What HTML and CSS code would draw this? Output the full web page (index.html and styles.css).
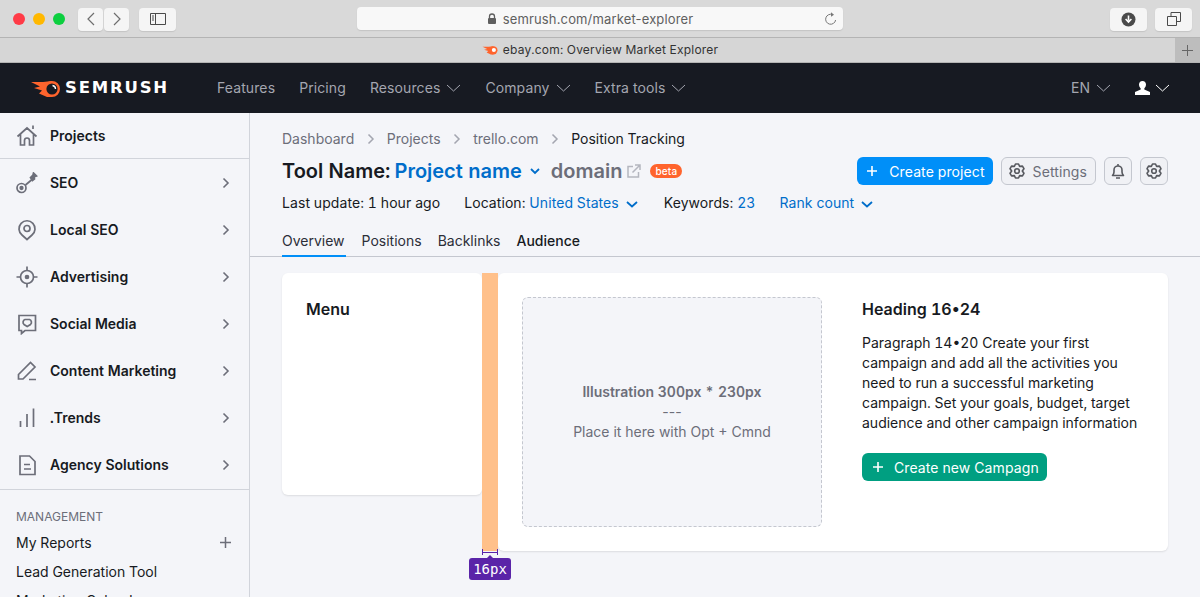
FILE: index.html
```html
<!DOCTYPE html>
<html lang="en">
<head>
  <meta charset="UTF-8" />
  <meta name="viewport" content="width=device-width, initial-scale=1.0" />
  <title>ebay.com: Overview Market Explorer</title>
  <link rel="stylesheet" href="styles.css">
</head>
<body>
  <!-- browser chrome -->
  <div class="toolbar">
    <div class="lights">
      <span class="light red"></span>
      <span class="light yellow"></span>
      <span class="light green"></span>
    </div>
    <div class="nav-btns">
      <span class="chrome-btn small"><svg width="10" height="16" viewBox="0 0 10 16"><path d="M8 2 2 8l6 6" class="line"/></svg></span>
      <span class="chrome-btn small"><svg width="10" height="16" viewBox="0 0 10 16"><path d="M2 2l6 6-6 6" class="line"/></svg></span>
    </div>
    <span class="chrome-btn sidebar-btn"><svg width="16" height="12" viewBox="0 0 16 12"><path d="M.5.5h15v11H.5zM5.500.5v11M2 3h2M2 5h2M2 7h2" class="line-thin"/></svg></span>
    <div class="url-bar">
      <span class="url-text">
        <svg width="10" height="12" viewBox="0 0 10 12"><path d="M2.500 5V3.500a2.500 2.500 0 0 1 5 0V5" fill="none" stroke="#5f5f5f" stroke-width="1.300"/><rect x="1" y="5" width="8" height="6" rx="1" fill="#5f5f5f"/></svg>
        semrush.com/market-explorer
      </span>
      <svg class="reload" width="13" height="14" viewBox="0 0 13 14"><path d="M8.500 2.600A5 5 0 1 0 11.600 8" fill="none" stroke="#777" stroke-width="1"/><path d="M7 .3l3 2.400-3 2.100z" fill="#777"/></svg>
    </div>
    <div class="chrome-right">
      <span class="chrome-btn wide"><svg width="15" height="15" viewBox="0 0 15 15"><circle cx="7.500" cy="7.500" r="7" fill="#4a4a4a"/><path d="M7.500 3.500v5M4.600 7l2.900 3 2.900-3" fill="none" stroke="#fff" stroke-width="1.600"/></svg></span>
      <span class="chrome-btn wide"><svg width="14" height="14" viewBox="0 0 14 14"><path d="M.5 4.500h9v9h-9zM4 4V.5h9.500v9H10" class="line-thin"/></svg></span>
    </div>
  </div>
  <div class="tabbar">
    <div class="tab-title">
      <svg width="16" height="10" viewBox="0 0 31 19"><path d="M1 3H13L22 2V18H17L9 14.500L12 11.500L4 9L10 7.500Z" fill="#ff642d"/><circle cx="22" cy="10" r="8" fill="#ff642d"/><circle cx="23" cy="9.500" r="4" fill="#fff"/></svg>
      ebay.com: Overview Market Explorer
    </div>
    <div class="tab-add">
      <svg width="11" height="11" viewBox="0 0 11 11"><path d="M5.500 0v11M0 5.500h11" stroke="#666" stroke-width="1"/></svg>
    </div>
  </div>

  <!-- site header -->
  <header class="site-header">
    <div class="logo">
      <svg width="31" height="19" viewBox="0 0 31 19">
        <path d="M1 3H13L22 2V18H17L9 14.500L12 11.500L4 9L10 7.500Z" fill="#ff642d"/>
        <circle cx="22" cy="10" r="6.800" fill="#171a22" stroke="#ff642d" stroke-width="2.400"/>
        <path d="M22.500 6.500a3.500 3.500 0 0 1 3 3.500" fill="none" stroke="#fff" stroke-width="1.300"/>
      </svg>
      <span class="logo-text">SEMRUSH</span>
    </div>
    <nav class="top-nav">
      <a>Features</a>
      <a>Pricing</a>
      <a>Resources <svg class="caret" width="15" height="8" viewBox="0 0 15 8"><path d="M1 1l6.500 6L14 1"/></svg></a>
      <a>Company <svg class="caret" width="15" height="8" viewBox="0 0 15 8"><path d="M1 1l6.500 6L14 1"/></svg></a>
      <a>Extra tools <svg class="caret" width="15" height="8" viewBox="0 0 15 8"><path d="M1 1l6.500 6L14 1"/></svg></a>
    </nav>
    <div class="top-right">
      <a>EN <svg class="caret" width="15" height="8" viewBox="0 0 15 8"><path d="M1 1l6.500 6L14 1"/></svg></a>
      <a class="user">
        <svg width="15" height="14" viewBox="0 0 15 14"><path d="M7.500 0C5.300 0 4 1.600 4 3.600c0 1.500.7 3 1.700 3.800v1L0 11v3h15v-3L9.300 8.400v-1C10.300 6.600 11 5.100 11 3.600 11 1.600 9.700 0 7.500 0z" fill="#fff"/></svg>
        <svg class="caret white" width="15" height="8" viewBox="0 0 15 8"><path d="M1 1l6.500 6L14 1"/></svg>
      </a>
    </div>
  </header>

  <div class="page">
    <aside class="sidebar">
      <a class="side-projects">
        <svg class="side-icon" width="22" height="22" viewBox="0 0 22 22"><path d="M1.500 11.500 11 3l9.500 8.500M4.500 9.500V20h4v-4.500a2.500 2.500 0 0 1 5 0V20h4V9.500M17 .5v3.500"/></svg>
        Projects
      </a>
      <div class="side-list">
        <a class="side-item">
          <svg class="side-icon" width="22" height="22" viewBox="0 0 22 22"><circle cx="5.500" cy="16" r="4.500"/><circle cx="5.500" cy="16" r="1.300" fill="#6c6e79"/><path d="M9.500 13 16 7.500"/><path d="M14.500 5.500 17 3l.5-2 3 3-2.500 1 .5 2-2 1.500z" fill="#6c6e79"/></svg>
          <span>SEO</span>
          <svg class="chev" width="8" height="12" viewBox="0 0 8 12"><path d="M1.500 1.500 6 6l-4.500 4.500"/></svg>
        </a>
        <a class="side-item">
          <svg class="side-icon" width="22" height="22" viewBox="0 0 22 22"><path d="M11 20.500 6 16a8 8 0 1 1 10 0z"/><circle cx="11" cy="9.500" r="3"/></svg>
          <span>Local SEO</span>
          <svg class="chev" width="8" height="12" viewBox="0 0 8 12"><path d="M1.500 1.500 6 6l-4.500 4.500"/></svg>
        </a>
        <a class="side-item">
          <svg class="side-icon" width="22" height="22" viewBox="0 0 22 22"><circle cx="11" cy="11" r="6.500"/><circle cx="11" cy="11" r="1.500" fill="#6c6e79"/><path d="M11 .5v4M11 17.500v4M.5 11h4M17.500 11h4"/></svg>
          <span>Advertising</span>
          <svg class="chev" width="8" height="12" viewBox="0 0 8 12"><path d="M1.500 1.500 6 6l-4.500 4.500"/></svg>
        </a>
        <a class="side-item">
          <svg class="side-icon" width="22" height="22" viewBox="0 0 22 22"><path d="M3 2.500h16.500v15H9L5.500 20.500v-3H3z"/><path d="M11.200 13.500 8 11.500a3 3 0 0 1 1-5h4.500a3 3 0 0 1 1 5z"/></svg>
          <span>Social Media</span>
          <svg class="chev" width="8" height="12" viewBox="0 0 8 12"><path d="M1.500 1.500 6 6l-4.500 4.500"/></svg>
        </a>
        <a class="side-item">
          <svg class="side-icon" width="22" height="22" viewBox="0 0 22 22"><path d="M2.500 19v-4.500L14.500 2.500 19 7 7 19zM13 19.500h7"/></svg>
          <span>Content Marketing</span>
          <svg class="chev" width="8" height="12" viewBox="0 0 8 12"><path d="M1.500 1.500 6 6l-4.500 4.500"/></svg>
        </a>
        <a class="side-item">
          <svg class="side-icon" width="22" height="22" viewBox="0 0 22 22"><path d="M4.500 20v-6M11 20V7M17.500 20V1.500"/></svg>
          <span>.Trends</span>
          <svg class="chev" width="8" height="12" viewBox="0 0 8 12"><path d="M1.500 1.500 6 6l-4.500 4.500"/></svg>
        </a>
        <a class="side-item">
          <svg class="side-icon" width="22" height="22" viewBox="0 0 22 22"><path d="M4 2h9.500L19 7.500V20.500H4zM8 10.500h6M8 15h7"/></svg>
          <span>Agency Solutions</span>
          <svg class="chev" width="8" height="12" viewBox="0 0 8 12"><path d="M1.500 1.500 6 6l-4.500 4.500"/></svg>
        </a>
      </div>
      <div class="side-section">
        <div class="side-label">MANAGEMENT</div>
        <a class="side-link">My Reports <svg width="11" height="11" viewBox="0 0 11 11"><path d="M5.500 0v11M0 5.500h11" stroke="#6c6e79" stroke-width="1.500"/></svg></a>
        <a class="side-link">Lead Generation Tool</a>
        <a class="side-link">Marketing Calendar</a>
      </div>
    </aside>

    <main class="content">
      <div class="crumbs">
        <a>Dashboard</a><svg class="crumb-sep" width="8" height="12" viewBox="0 0 8 12"><path d="M1.500 1.500 6 6l-4.500 4.500"/></svg>
        <a>Projects</a><svg class="crumb-sep" width="8" height="12" viewBox="0 0 8 12"><path d="M1.500 1.500 6 6l-4.500 4.500"/></svg>
        <a>trello.com</a><svg class="crumb-sep" width="8" height="12" viewBox="0 0 8 12"><path d="M1.500 1.500 6 6l-4.500 4.500"/></svg>
        <span>Position Tracking</span>
      </div>

      <div class="title-row">
        <h1 class="title">Tool Name:</h1>
        <a class="project-name">Project name</a>
        <svg class="blue-caret" width="10" height="7" viewBox="0 0 10 7"><path d="M1 1l4 4 4-4"/></svg>
        <span class="domain">domain</span>
        <svg class="ext" width="14" height="14" viewBox="0 0 14 14"><path d="M6 2.500H1v10.500h10.500V8M5.500 8.500 12.500 1.500M8 1h5v5" fill="none" stroke="#b4b6bf" stroke-width="1.500"/></svg>
        <span class="beta">beta</span>
        <div class="title-actions">
          <button class="btn primary"><svg width="12" height="12" viewBox="0 0 12 12"><path d="M6 1v10M1 6h10" stroke="#fff" stroke-width="1.600"/></svg>Create project</button>
          <button class="btn grey"><svg class="gear" width="16" height="16" viewBox="0 0 16 16"><path d="M6.500 1H9.500L10.650 3.400L13.450 3.100L14.950 5.700L13.300 8L14.950 10.300L13.450 12.900L10.650 12.600L9.500 15H6.500L5.350 12.600L2.550 12.900L1.050 10.300L2.700 8L1.050 5.700L2.550 3.100L5.350 3.400Z"/><circle cx="8" cy="8" r="2.300"/></svg>Settings</button>
          <button class="btn grey icon-only"><svg class="gear" width="16" height="16" viewBox="0 0 16 16"><path d="M2.500 12.500c1-1 1.500-1.500 1.500-3.500V7a4 4 0 0 1 8 0v2c0 2 .5 2.500 1.500 3.500zM6 15h4M8 1v2"/></svg></button>
          <button class="btn grey icon-only"><svg class="gear" width="16" height="16" viewBox="0 0 16 16"><path d="M6.500 1H9.500L10.650 3.400L13.450 3.100L14.950 5.700L13.300 8L14.950 10.300L13.450 12.900L10.650 12.600L9.500 15H6.500L5.350 12.600L2.550 12.900L1.050 10.300L2.700 8L1.050 5.700L2.550 3.100L5.350 3.400Z"/><circle cx="8" cy="8" r="2.300"/></svg></button>
        </div>
      </div>

      <div class="meta-row">
        <span>Last update: 1 hour ago</span>
        <span>Location: <a>United States</a><svg class="blue-caret" width="12" height="7" viewBox="0 0 12 7"><path d="M1 1l5 4.500L11 1"/></svg></span>
        <span>Keywords: <a>23</a></span>
        <span><a>Rank count</a><svg class="blue-caret" width="12" height="7" viewBox="0 0 12 7"><path d="M1 1l5 4.500L11 1"/></svg></span>
      </div>

      <div class="tabs">
        <a class="tab active">Overview</a>
        <a class="tab">Positions</a>
        <a class="tab">Backlinks</a>
        <a class="tab strong">Audience</a>
      </div>

      <div class="body-area">
        <section class="menu-card">
          <h2>Menu</h2>
        </section>
        <div class="spacer-mark">
          <div class="spacer-bracket"></div>
          <div class="spacer-label">16px</div>
        </div>
        <section class="main-card">
          <div class="illustration">
            <strong>Illustration 300px * 230px</strong>
            <span>---</span>
            <span>Place it here with Opt + Cmnd</span>
          </div>
          <div class="copy">
            <h2>Heading 16•24</h2>
            <p>Paragraph 14•20 Create your first campaign and add all the activities you need to run a successful marketing campaign. Set your goals, budget, target audience and other campaign information</p>
            <button class="btn green"><svg width="12" height="12" viewBox="0 0 12 12"><path d="M6 1v10M1 6h10" stroke="#fff" stroke-width="1.600"/></svg>Create new Campagn</button>
          </div>
        </section>
      </div>
    </main>
  </div>
</body>
</html>
```
FILE: styles.css
```css
* {
  box-sizing: border-box;
}
html, body {
  margin: 0;
  height: 597px;
  overflow: hidden;
}
body {
  font-family: Inter, "Liberation Sans", sans-serif;
  font-size: 14px;
  line-height: 20px;
  font-variant-numeric: tabular-nums;
  color: #171a22;
  background: #f4f5f9;
}
h1, h2, p {
  margin: 0;
}
button {
  font-family: inherit;
  font-variant-numeric: inherit;
}

/* browser chrome */
.toolbar {
  height: 38px;
  display: flex;
  align-items: center;
  padding: 1px 8px 0 13px;
  background: #d9d9d9;
  border-bottom: 1px solid #b4b4b4;
  position: relative;
}
.lights {
  display: flex;
  gap: 8px;
  width: 65px;
}
.light {
  width: 12px;
  height: 12px;
  border-radius: 50%;
}
.light.red { background: #ff3b47; }
.light.yellow { background: #ffb800; }
.light.green { background: #0ccf3f; }
.nav-btns {
  display: flex;
  gap: 1px;
}
.chrome-btn {
  display: flex;
  align-items: center;
  justify-content: center;
  height: 23px;
  background: #f5f5f5;
  border-radius: 4px;
  box-shadow: 0 1px 1px #c4c4c4;
}
.chrome-btn.small { width: 25px; }
.chrome-btn.wide { width: 37px; }
.sidebar-btn {
  width: 37px;
  margin-left: 10px;
}
.line {
  fill: none;
  stroke: #6e6e6e;
  stroke-width: 1.200;
}
.line-thin {
  fill: none;
  stroke: #4a4a4a;
  stroke-width: 1;
}
.url-bar {
  position: absolute;
  left: 357px;
  top: 7px;
  width: 486px;
  height: 23px;
  padding-right: 20px;
  background: #f8f8f8;
  border-radius: 4px;
  box-shadow: 0 1px 1px #c4c4c4;
  display: flex;
  align-items: center;
  justify-content: center;
  color: #5f5f5f;
  font-size: 13px;
  font-variant-numeric: normal;
  letter-spacing: .15px;
}
.url-text {
  display: flex;
  align-items: center;
  gap: 6px;
}
.reload {
  position: absolute;
  right: 6px;
  top: 5px;
}
.chrome-right {
  margin-left: auto;
  display: flex;
  gap: 8px;
}
.tabbar {
  height: 25px;
  background: #d6d6d6;
  border-bottom: 1px solid #b4b4b4;
  display: flex;
  align-items: center;
  position: relative;
  justify-content: center;
}
.tab-title {
  display: flex;
  align-items: center;
  gap: 5px;
  font-size: 12px;
  letter-spacing: .2px;
  color: #333;
}
.tab-add {
  position: absolute;
  right: 0;
  top: 0;
  width: 25px;
  height: 24px;
  background: #bdbdbd;
  display: flex;
  align-items: center;
  justify-content: center;
}

/* site header */
.site-header {
  height: 50px;
  background: #171a22;
  display: flex;
  align-items: center;
  padding: 0 30px;
}
.logo {
  display: flex;
  align-items: center;
  gap: 4px;
  width: 187px;
}
.logo-text {
  color: #fff;
  font-family: "DejaVu Sans", sans-serif;
  font-size: 16.500px;
  font-weight: 700;
  letter-spacing: 1.800px;
}
.top-nav {
  display: flex;
  gap: 24px;
  color: #a4a6b0;
  letter-spacing: .1px;
}
.top-nav a, .top-right a {
  display: flex;
  align-items: center;
  gap: 6px;
}
.caret {
  fill: none;
  stroke: #a4a6b0;
  stroke-width: 1;
}
.caret.white {
  stroke: #fff;
}
.top-right {
  margin-left: auto;
  display: flex;
  gap: 24px;
  color: #a4a6b0;
}
.top-right .user {
  gap: 5px;
}

/* page */
.page {
  display: flex;
  height: 484px;
}
.sidebar {
  width: 250px;
  flex: none;
  border-right: 1px solid #d1d4db;
  overflow: hidden;
}
.side-projects {
  height: 46px;
  border-bottom: 1px solid #d1d4db;
  display: flex;
  align-items: center;
  gap: 12px;
  padding-left: 16px;
  font-weight: 600;
}
.side-icon {
  flex: none;
  fill: none;
  stroke: #6c6e79;
  stroke-width: 1.700;
}
.side-list {
  padding-bottom: 1px;
  border-bottom: 1px solid #d1d4db;
}
.side-item {
  height: 47px;
  display: flex;
  align-items: center;
  gap: 12px;
  padding: 0 19px 0 16px;
  font-weight: 600;
}
.side-item span {
  flex: 1;
}
.chev {
  fill: none;
  stroke: #6c6e79;
  stroke-width: 1.600;
}
.side-section {
  padding: 18px 18px 0 16px;
}
.side-label {
  font-size: 12px;
  line-height: 18px;
  color: #6c6e79;
}
.side-link {
  display: flex;
  justify-content: space-between;
  align-items: center;
  height: 29px;
  padding-top: 4px;
}

/* content */
.content {
  flex: 1;
  min-width: 0;
}
.crumbs {
  display: flex;
  align-items: center;
  padding: 16px 0 0 32px;
  color: #6c6e79;
}
.crumb-sep {
  margin: 0 12.300px;
  fill: none;
  stroke: #a4a6b0;
  stroke-width: 1.500;
}
.crumbs span {
  color: #171a22;
}
.title-row {
  display: flex;
  align-items: center;
  height: 32px;
  margin-top: 6px;
  padding: 0 32px;
}
.title {
  font-size: 20px;
  font-weight: 600;
  margin-right: 4px;
}
.project-name {
  color: #006dca;
  font-size: 20px;
  font-weight: 600;
}
.title-row .blue-caret {
  margin: 0 11px 0 8px;
}
.blue-caret {
  fill: none;
  stroke: #006dca;
  stroke-width: 1.800;
  margin: 0 2px 0 7px;
}
.domain {
  color: #6c6e79;
  font-size: 20px;
  font-weight: 600;
}
.ext {
  margin: 0 9px 0 5px;
}
.beta {
  background: #ff642d;
  color: #fff;
  border-radius: 7px;
  font-size: 10px;
  line-height: 14px;
  padding: 0 5px;
  letter-spacing: .2px;
  font-weight: 500;
}
.title-actions {
  margin-left: auto;
  display: flex;
  gap: 8px;
}
.btn {
  height: 28px;
  border-radius: 6px;
  font-size: 14px;
  letter-spacing: .1px;
  display: flex;
  align-items: center;
  gap: 8px;
  border: 1px solid transparent;
}
.btn.primary {
  background: #008ff8;
  color: #fff;
  padding: 0 7px 0 8px;
  gap: 11px;
}
.btn.grey {
  background: #f0f1f5;
  border-color: #c4c7cf;
  color: #6c6e79;
  padding: 0 8px 0 7px;
}
.btn.icon-only {
  width: 28px;
  justify-content: center;
  padding: 0;
}
.gear {
  flex: none;
  fill: none;
  stroke: #57595f;
  stroke-width: 1.600;
  stroke-linejoin: round;
}
.btn.green {
  background: #009f81;
  color: #fff;
  padding: 0 7px 0 9px;
  gap: 10px;
}
.meta-row {
  display: flex;
  gap: 24px;
  padding: 6px 32px 0;
  height: 26px;
  align-items: center;
  letter-spacing: .07px;
}
.meta-row a {
  color: #006dca;
}
.tabs {
  display: flex;
  gap: 16px;
  height: 44px;
  padding: 18px 32px 0;
  border-bottom: 1px solid #c4c7cf;
}
.tab {
  color: #2c2e38;
  height: 26px;
}
.tab.active {
  border-bottom: 2px solid #008ff8;
  padding-right: 1px;
}
.tab.strong {
  font-weight: 500;
  color: #171a22;
}
.body-area {
  display: flex;
  margin: 16px 32px 0;
  height: 278px;
}
.menu-card {
  width: 200px;
  height: 222px;
  background: #fff;
  border-radius: 6px;
  box-shadow: 0 1px 2px rgba(0, 0, 0, .1);
  padding: 26px 24px;
}
.menu-card h2, .copy h2 {
  font-size: 16px;
  line-height: 20px;
  font-weight: 600;
}
.spacer-mark {
  width: 16px;
  background: #ffc08a;
  position: relative;
}
.spacer-bracket {
  position: absolute;
  left: 0;
  top: 276px;
  width: 16px;
  height: 6px;
  border-left: 1px solid #5a24a8;
  border-right: 1px solid #5a24a8;
  background: linear-gradient(#5a24a8, #5a24a8) 0 3px / 100% 1px no-repeat;
}
.spacer-label {
  position: absolute;
  left: -13px;
  top: 285px;
  width: 42px;
  height: 22px;
  background: #5a24a8;
  color: #fff;
  border-radius: 3px;
  font-family: "DejaVu Sans Mono", monospace;
  font-size: 14px;
  line-height: 22px;
  text-align: center;
}
.spacer-label::before {
  content: "";
  position: absolute;
  left: 18px;
  top: -3px;
  border-left: 3px solid transparent;
  border-right: 3px solid transparent;
  border-bottom: 3px solid #5a24a8;
}
.main-card {
  flex: 1;
  background: #fff;
  border-radius: 6px;
  box-shadow: 0 1px 2px rgba(0, 0, 0, .1);
  display: flex;
  gap: 40px;
  padding: 24px;
}
.illustration {
  width: 300px;
  height: 230px;
  background: #f4f5f9;
  border: 1px dashed #c4c7cf;
  border-radius: 6px;
  display: flex;
  flex-direction: column;
  align-items: center;
  justify-content: center;
  color: #6c6e79;
}
.illustration span {
  font-variant-numeric: normal;
}
.illustration strong {
  font-weight: 600;
}
.copy {
  flex: 1;
  padding-top: 2px;
}
.copy p {
  margin-top: 14px;
}
.copy .btn {
  margin-top: 20px;
}
```
